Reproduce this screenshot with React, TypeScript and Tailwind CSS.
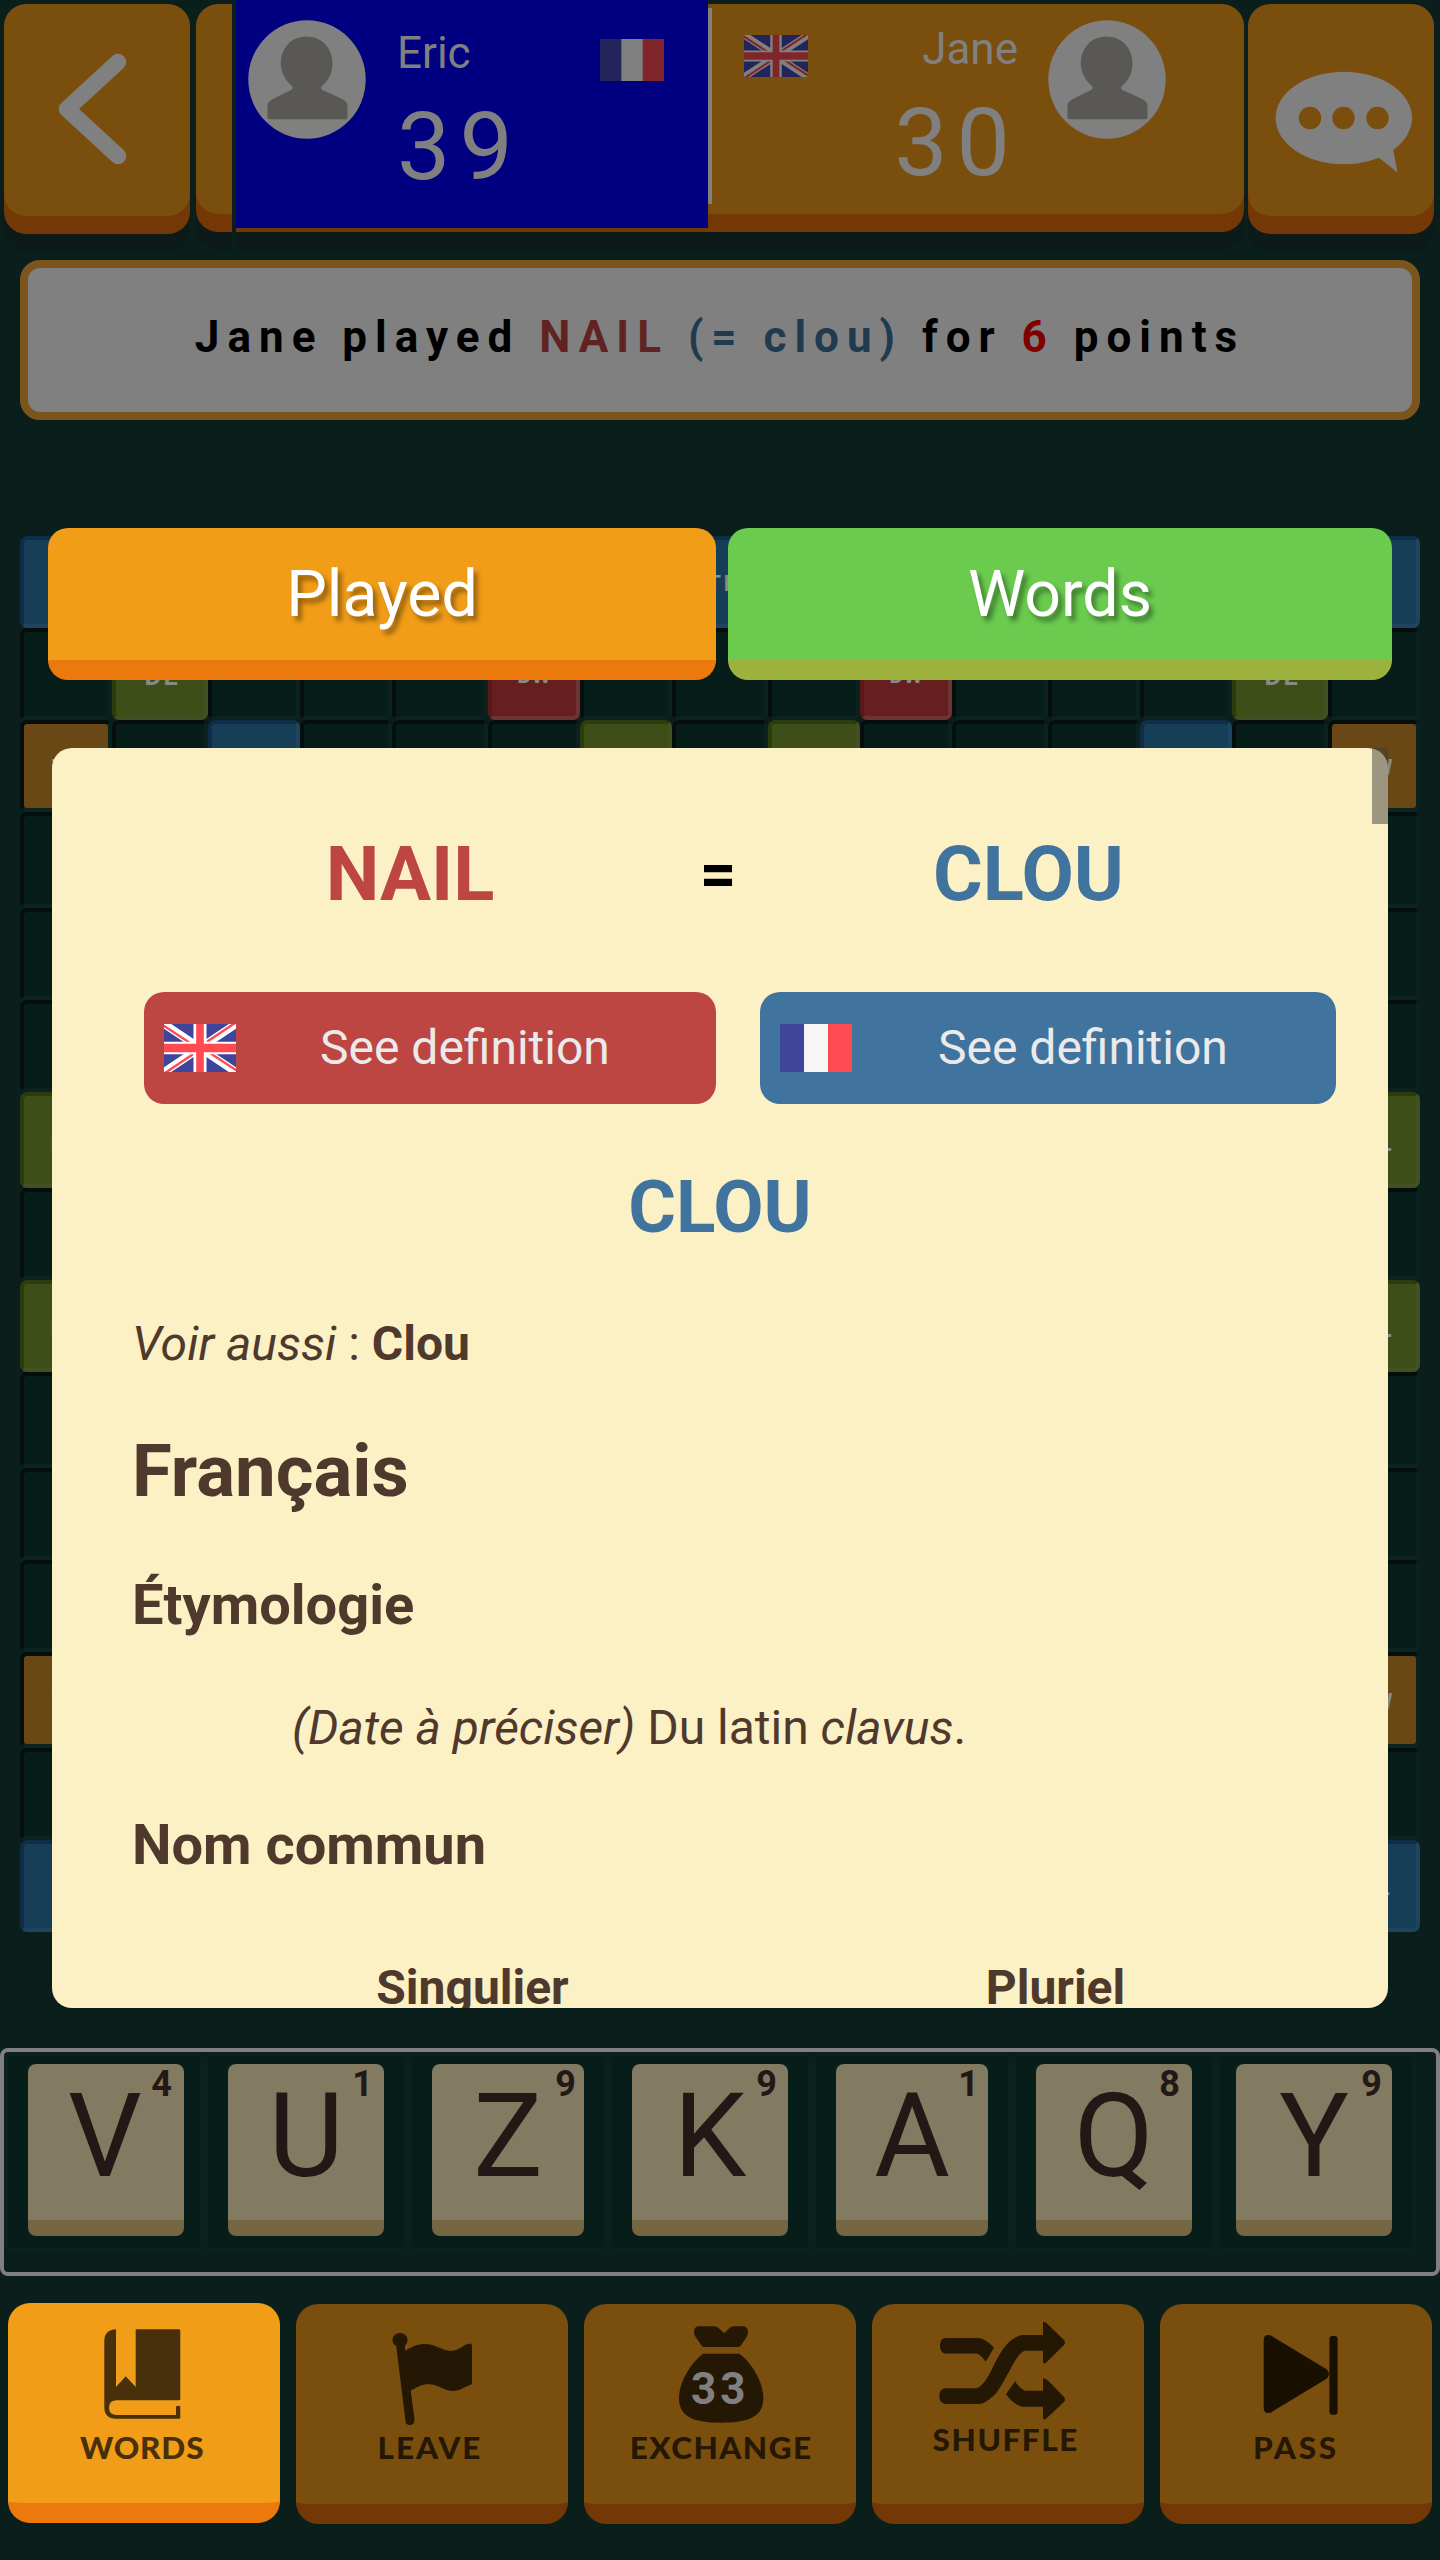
import React from "react";

type CellKind = "plain" | "blue" | "green" | "red" | "orange";

const CELL_STYLE: Record<CellKind, string> = {
  plain: "text-[22px] bg-[#071d1a] border-t-[#050d0d] border-l-[#050d0d] border-b-[#0a2320] border-r-[#0a2320]",
  blue: "text-[22px] bg-[#173e57] border-t-[#0f2c49] border-l-[#0f2c49] border-b-[#1e445f] border-r-[#1e445f] pl-[6px] tracking-[3px]",
  green: "text-[26px] bg-[#3e4e18] border-t-[#2b3c0d] border-l-[#2b3c0d] border-b-[#435021] border-r-[#435021] pl-[4px] tracking-[2px]",
  red: "text-[22px] bg-[#651f1f] border-t-[#5c1717] border-l-[#5c1717] border-b-[#6c3432] border-r-[#6c3432]",
  orange: "text-[22px] bg-[#6a4815] border-t-[#050d0d] border-l-[#050d0d] border-b-[#0a2320] border-r-[#0a2320] pl-[4px]",
};

const CELL_LABEL: Record<CellKind, string> = {
  plain: "",
  blue: "TL",
  green: "DL",
  red: "DW",
  orange: "TW",
};

const LETTER_KIND: Record<string, CellKind> = {
  ".": "plain",
  b: "blue",
  g: "green",
  r: "red",
  o: "orange",
};

const BOARD = [
  "b......b......b",
  ".g...r...r...g.",
  "o.b...g.g...b.o",
  "...............",
  "...............",
  "...............",
  "g.............g",
  "...............",
  "g.............g",
  "...............",
  "...............",
  "...............",
  "o.............o",
  "...............",
  "b.............b",
];

const TILES = [
  { letter: "V", points: 4, slot: "w-[200px]", tile: "ml-5 w-[156px] pr-[2px]", mark: "right-[12px]" },
  { letter: "U", points: 1, slot: "w-[204px]", tile: "ml-5 w-[156px]", mark: "right-[11px]" },
  { letter: "Z", points: 9, slot: "w-[200px]", tile: "ml-5 w-[152px]", mark: "right-[8px]" },
  { letter: "K", points: 9, slot: "w-[204px]", tile: "ml-5 w-[156px]", mark: "right-[11px]" },
  { letter: "A", points: 1, slot: "w-[200px]", tile: "ml-5 w-[152px]", mark: "right-[9px]" },
  { letter: "Q", points: 8, slot: "w-[204px]", tile: "ml-5 w-[156px]", mark: "right-[12px]" },
  { letter: "Y", points: 9, slot: "w-[200px]", tile: "ml-4 w-[156px]", mark: "right-[10px]" },
];

function UkFlag({ dim, className }: { dim?: boolean; className: string }) {
  const blue = dim ? "#22245a" : "#3f459b";
  const white = dim ? "#808080" : "#ffffff";
  const red = dim ? "#80262b" : "#ff4a52";
  return (
    <svg viewBox="0 0 72 48" preserveAspectRatio="none" className={className}>
      <rect width="72" height="48" fill={blue} />
      <path d="M0 0L72 48M72 0L0 48" stroke={white} strokeWidth="8" />
      <path d="M-1 1.2L36 25.5M73 46.8L36 22.5M71 -1L36 22.5M1 49L36 25.5" stroke={red} strokeWidth="2.4" />
      <path d="M36 0V48" stroke={white} strokeWidth="13" />
      <path d="M0 24H72" stroke={white} strokeWidth="12.5" />
      <path d="M36 0V48" stroke={red} strokeWidth="7.6" />
      <path d="M0 24H72" stroke={red} strokeWidth="8.4" />
    </svg>
  );
}

function FrFlag({ dim, className }: { dim?: boolean; className: string }) {
  return (
    <svg viewBox="0 0 3 2" preserveAspectRatio="none" className={className}>
      <rect width="3" height="2" fill={dim ? "#808080" : "#f6f6f6"} />
      <rect width="1" height="2" fill={dim ? "#22245a" : "#3f459b"} />
      <rect x="2" width="1" height="2" fill={dim ? "#80262b" : "#ff4a52"} />
    </svg>
  );
}

function Avatar({ className }: { className: string }) {
  return (
    <svg viewBox="0 0 118 119" className={className}>
      <ellipse cx="59" cy="59.5" rx="58.7" ry="59.2" fill="#808080" />
      <path
        d="M58.500 16.500C74 16.500 84.500 28 84.500 44C84.500 53 80 61 74 66C72.800 67.500 73 69 74.500 70L91 77.500C97 80.500 99.500 82.500 99.500 86V97.500Q99.500 99.200 97.500 99.200H21.500Q19.500 99.200 19.500 97.500V86C19.500 82.500 22 80.500 28 77.500L43 70C44.500 69 45 67.500 44 66C38 61 32.800 53 32.800 44C32.800 28 43 16.500 58.500 16.500Z"
        fill="#5a5855"
      />
    </svg>
  );
}

function Header() {
  return (
    <header className="flex h-[260px] items-start pl-1 pt-1">
      <button className="flex h-[212px] w-[186px] rounded-[22px] bg-[#7a4e0c] shadow-[0_18px_0_#733806,0_36px_0_#0c1b1a]">
        <svg viewBox="0 0 186 212" className="h-full w-full" fill="none">
          <path d="M114 58L63 105L114 152" stroke="#808080" strokeWidth="16.500" strokeLinecap="round" strokeLinejoin="round" />
        </svg>
      </button>
      <div className="ml-1.5 flex h-[210px] w-[1048px] items-start rounded-[22px] bg-[#7a4e0c] shadow-[0_18px_0_#733806,0_36px_0_#0c1b1a]">
        <div className="ml-9 h-[246px] w-1 bg-[#0a1e1b]" />
        <div className="-mt-1 flex h-[228px] w-[472px] items-start bg-[#000080] pl-3 text-[#808080]">
          <Avatar className="mt-5 h-[119px] w-[118px]" />
          <div className="ml-[31px] flex flex-col pt-[27px]">
            <span className="text-[44px] leading-[52px]">Eric</span>
            <span className="mt-[18px] text-[95px] leading-[100px] tracking-[9px]">39</span>
          </div>
          <FrFlag dim className="ml-auto mr-[44px] mt-[39px] h-[42px] w-16" />
        </div>
        <div className="mt-1 h-[196px] w-1 bg-[#808080]" />
        <div className="flex flex-1 items-start pl-8 pr-[78px] text-[#808080]">
          <UkFlag dim className="mt-[31px] h-[42px] w-16" />
          <div className="ml-auto flex flex-col items-end pt-[19px]">
            <span className="text-[44px] leading-[52px]">Jane</span>
            <span className="-mr-px mt-[18px] text-[95px] leading-[100px] tracking-[9px]">30</span>
          </div>
          <Avatar className="ml-[30px] mt-4 h-[119px] w-[118px]" />
        </div>
      </div>
      <button className="ml-1 flex h-[212px] w-[186px] rounded-[22px] bg-[#7a4e0c] shadow-[0_18px_0_#733806,0_36px_0_#0c1b1a]">
        <svg viewBox="0 0 186 212" className="h-full w-full">
          <path d="M120 145L149.500 168.500L144 140Z" fill="#808080" />
          <ellipse cx="95.800" cy="114" rx="68.200" ry="46.200" fill="#808080" />
          <circle cx="62" cy="114" r="11.200" fill="#7a4e0c" />
          <circle cx="95.500" cy="114" r="11.200" fill="#7a4e0c" />
          <circle cx="129.500" cy="114" r="11.200" fill="#7a4e0c" />
        </svg>
      </button>
    </header>
  );
}

function Message() {
  return (
    <div className="mx-5 flex h-[160px] items-center justify-center whitespace-pre rounded-[20px] border-8 border-[#7b551c] bg-[#808080] pb-[6px] text-[44px] font-bold tracking-[8px] text-black">
      <span>Jane played </span>
      <span className="text-[#602322]">NAIL </span>
      <span className="text-[#203b50]">(= clou) </span>
      <span>for </span>
      <span className="text-[#800000]">6 </span>
      <span>points</span>
    </div>
  );
}

function Board() {
  return (
    <div className="mx-5 mt-[116px] grid grid-cols-[92px_96px_92px_92px_96px_92px_92px_96px_92px_92px_96px_92px_92px_96px_92px] grid-rows-[92px_92px_92px_96px_92px_92px_96px_92px_92px_96px_92px_92px_96px_92px_92px]">
      {BOARD.flatMap((row, r) =>
        row.split("").map((c, i) => {
          const kind = LETTER_KIND[c];
          return (
            <div
              key={`${r}-${i}`}
              className={`flex items-center justify-center rounded-[7px] border-4 pt-[3px] font-bold leading-6 text-[#8a8a85] ${CELL_STYLE[kind]}`}
            >
              {CELL_LABEL[kind]}
            </div>
          );
        })
      )}
    </div>
  );
}

function Rack() {
  return (
    <div className="mt-[116px] flex h-[228px] items-start rounded-[8px] border-4 border-[#808080]">
      {TILES.map((t) => (
        <div key={t.letter} className={`h-[200px] rounded-[8px] border-4 border-[#0a211e] bg-[#071d1a] pt-2 ${t.slot}`}>
          <div
            className={`relative h-[172px] rounded-[8px] border-b-[16px] border-[#756643] bg-[#827a61] text-center text-[116px] leading-[144px] text-[#231815] ${t.tile}`}
          >
            {t.letter}
            <span className={`absolute top-0 text-[36px] font-bold leading-[40px] ${t.mark}`}>{t.points}</span>
          </div>
        </div>
      ))}
    </div>
  );
}

function Action({
  label,
  active,
  labelClass,
  children,
}: {
  label: string;
  active?: boolean;
  labelClass: string;
  children: React.ReactNode;
}) {
  const tone = active
    ? "relative -mt-px bg-[#f29d18] border-[#eb790b] text-[#48300a]"
    : "relative bg-[#7a4e0c] border-[#743806] text-[#241804]";
  return (
    <button className={`flex h-[220px] w-[272px] flex-col items-center rounded-[22px] border-b-[20px] ${tone}`}>
      {children}
      <span className={`scale-x-105 font-['Lato'] text-[30px] font-black leading-[36px] ${labelClass}`}>{label}</span>
    </button>
  );
}

function Actions() {
  const art = "h-[124px] w-[272px] shrink-0";
  return (
    <nav className="mt-7 flex items-start gap-4 px-2">
      <Action label="WORDS" active labelClass="mt-[2px] -ml-1 tracking-[0.8px]">
        <svg viewBox="0 0 272 124" className={art} fill="currentColor">
          <path d="M108 26.300V84L117.700 73.300L127.700 84V26.300H171Q172.300 26.300 172.300 27.600V96Q172.300 97.300 171 97.300H109Q101 97.300 101 104.700T109 112H168V104Q168 102.700 170.200 102.700T172.300 104V114.400Q172.300 115.700 171 115.700H108Q96.300 115.700 96.300 104V38Q96.300 27 108 26.300Z" />
        </svg>
      </Action>
      <Action label="LEAVE" labelClass="mt-[1px] -ml-1 tracking-[1.9px]">
        <svg viewBox="0 0 272 124" className={art} fill="currentColor">
          <ellipse cx="104" cy="36" rx="7.600" ry="7" />
          <path d="M100 40H108.500L118.500 115Q118.500 121 114 121T109.500 117Z" />
          <path d="M108.500 47.500C118 41 126 38.500 136 41C146 44 150 48 158 46.500C165 45 168 40 174 39.500Q176 39.500 176 41.500V79Q176 80.500 174 81C168 83 164 87 157 87C148 87 143 80.500 133 80.300C125 80.300 122 83 114 87Z" />
        </svg>
      </Action>
      <Action label="EXCHANGE" labelClass="mt-[1px] ml-0.5 tracking-[1.4px]">
        <svg viewBox="0 0 272 124" className={art} fill="currentColor">
          <path d="M115 22.300H130Q133 22.300 135 24.500L140.300 29.300L145 24.500Q147 22.300 150 22.300H158Q164 22.300 164 28Q164 31 162 34L156.500 42Q155.500 43 154 43H120Q118.500 43 117.500 41.500L112 33.500Q110 31 110 28Q110 22.300 115 22.300Z" />
          <path d="M119 49.700H155.500C170 61 179.300 80 179.300 94C179.300 112 166 118.700 137 118.700C108 118.700 95 112 95 94C95 80 104.500 61 119 49.700Z" />
        </svg>
        <span className="absolute left-[107px] top-[59px] text-[44px] font-bold leading-[52px] tracking-[4px] text-[#808080]">33</span>
      </Action>
      <Action label="SHUFFLE" labelClass="-mt-[7px] -ml-1 tracking-[1.5px]">
        <svg viewBox="0 0 272 124" className={art} fill="currentColor">
          <path d="M72.500 34H107Q114 35 122 43.700L113.700 57.700Q109 51 104.500 49.500H72.500Q68 48 68 41.700T72.500 34Z" />
          <path d="M72.500 84.300H104Q111 83 119.500 66C127 51 134 35 149.700 31H171V17.700Q174 17.700 176.500 21L192 36Q194 38.300 192 41L173.500 59.300H171V46.700H153Q147 48 138 66C131 78 128 85 122.500 91Q113 99.500 108 100H72.500Q67.300 98 67.300 92T72.500 84.300Z" />
          <path d="M143 77.300L134 90.300Q141 100 149.700 102.700H171V115.300H173.500L192 98Q194 95.300 192 93L176.500 77Q174 74.300 171 74.300V86.700H153Q147 84 143 77.300Z" />
        </svg>
      </Action>
      <Action label="PASS" labelClass="mt-[1px] tracking-[2.6px]">
        <svg viewBox="0 0 272 124" className={`${art} text-[#1a1002]`} fill="currentColor">
          <path d="M103.700 36Q103.700 31 108 31Q111 31 114 33.500L167 65.500Q171 70 167 74.500L114 106.500Q111 109 108 109Q103.700 109 103.700 104Z" />
          <rect x="169.400" y="32" width="8.200" height="78.700" rx="3" />
        </svg>
      </Action>
    </nav>
  );
}

function DefinitionModal() {
  return (
    <div className="absolute inset-0 flex flex-col pt-[528px]">
      <div className="flex gap-3 pl-12 text-[64.5px] leading-[76px] text-white">
        <button className="flex h-[152px] w-[668px] items-center justify-center rounded-[20px] border-b-[20px] border-[#eb790b] bg-[#f29d18] [text-shadow:4px_5px_5px_rgba(0,0,0,0.4)]">
          Played
        </button>
        <button className="flex h-[152px] w-[664px] items-center justify-center rounded-[20px] border-b-[20px] border-[#9db23d] bg-[#6acb4f] [text-shadow:4px_5px_5px_rgba(0,0,0,0.4)]">
          Words
        </button>
      </div>
      <div className="relative ml-[52px] mt-[68px] w-[1336px]">
        <div className="h-[1260px] overflow-hidden rounded-[20px] bg-[#fcf0c5] text-[#4f392d]">
          <div className="grid grid-cols-[556px_60px_561px] items-start justify-items-center pl-20 pt-[82px] text-[76px] font-bold leading-[88px]">
            <span className="text-[#bd4642]">NAIL</span>
            <span className="pt-px text-[64px] leading-[87px] text-black">=</span>
            <span className="text-[#40749e]">CLOU</span>
          </div>
          <div className="mt-[74px] flex gap-[44px] pl-[92px] text-[48px] leading-[56px] text-[#eaeaea]">
            <button className="flex h-[112px] w-[572px] items-center rounded-[20px] bg-[#bd4642] pl-5">
              <UkFlag className="h-12 w-[72px]" />
              <span className="ml-[84px]">See definition</span>
            </button>
            <button className="flex h-[112px] w-[576px] items-center rounded-[20px] bg-[#40749e] pl-5">
              <FrFlag className="h-12 w-[72px]" />
              <span className="ml-[86px]">See definition</span>
            </button>
          </div>
          <h1 className="mt-[61px] text-center text-[73px] font-bold leading-[84px] text-[#40749e]">CLOU</h1>
          <div className="pl-20 text-[48px] leading-[56px]">
            <p className="mt-[67px]">
              <em>Voir aussi</em> : <b>Clou</b>
            </p>
            <h2 className="mt-[57px] pt-px text-[72.5px] font-bold leading-[83px]">Français</h2>
            <h3 className="mt-[59px] text-[56px] font-bold leading-[66px]">Étymologie</h3>
            <p className="mt-[62px] pl-40">
              <em>(Date à préciser)</em> Du latin <em>clavus</em>.
            </p>
            <h3 className="mt-[56px] text-[56px] font-bold leading-[66px]">Nom commun</h3>
          </div>
          <div className="mt-[82px] grid grid-cols-[583px_583px] pl-[129px] text-center text-[48px] font-bold leading-[56px]">
            <span>Singulier</span>
            <span>Pluriel</span>
          </div>
        </div>
        <div className="absolute right-0 top-0 h-[76px] w-4 bg-[#3c3c3c]/50" />
      </div>
    </div>
  );
}

export default function App() {
  return (
    <main className="relative h-[2560px] w-[1440px] overflow-hidden bg-[#0a1e1b] font-['Roboto',sans-serif]">
      <Header />
      <Message />
      <Board />
      <Rack />
      <Actions />
      <DefinitionModal />
    </main>
  );
}
